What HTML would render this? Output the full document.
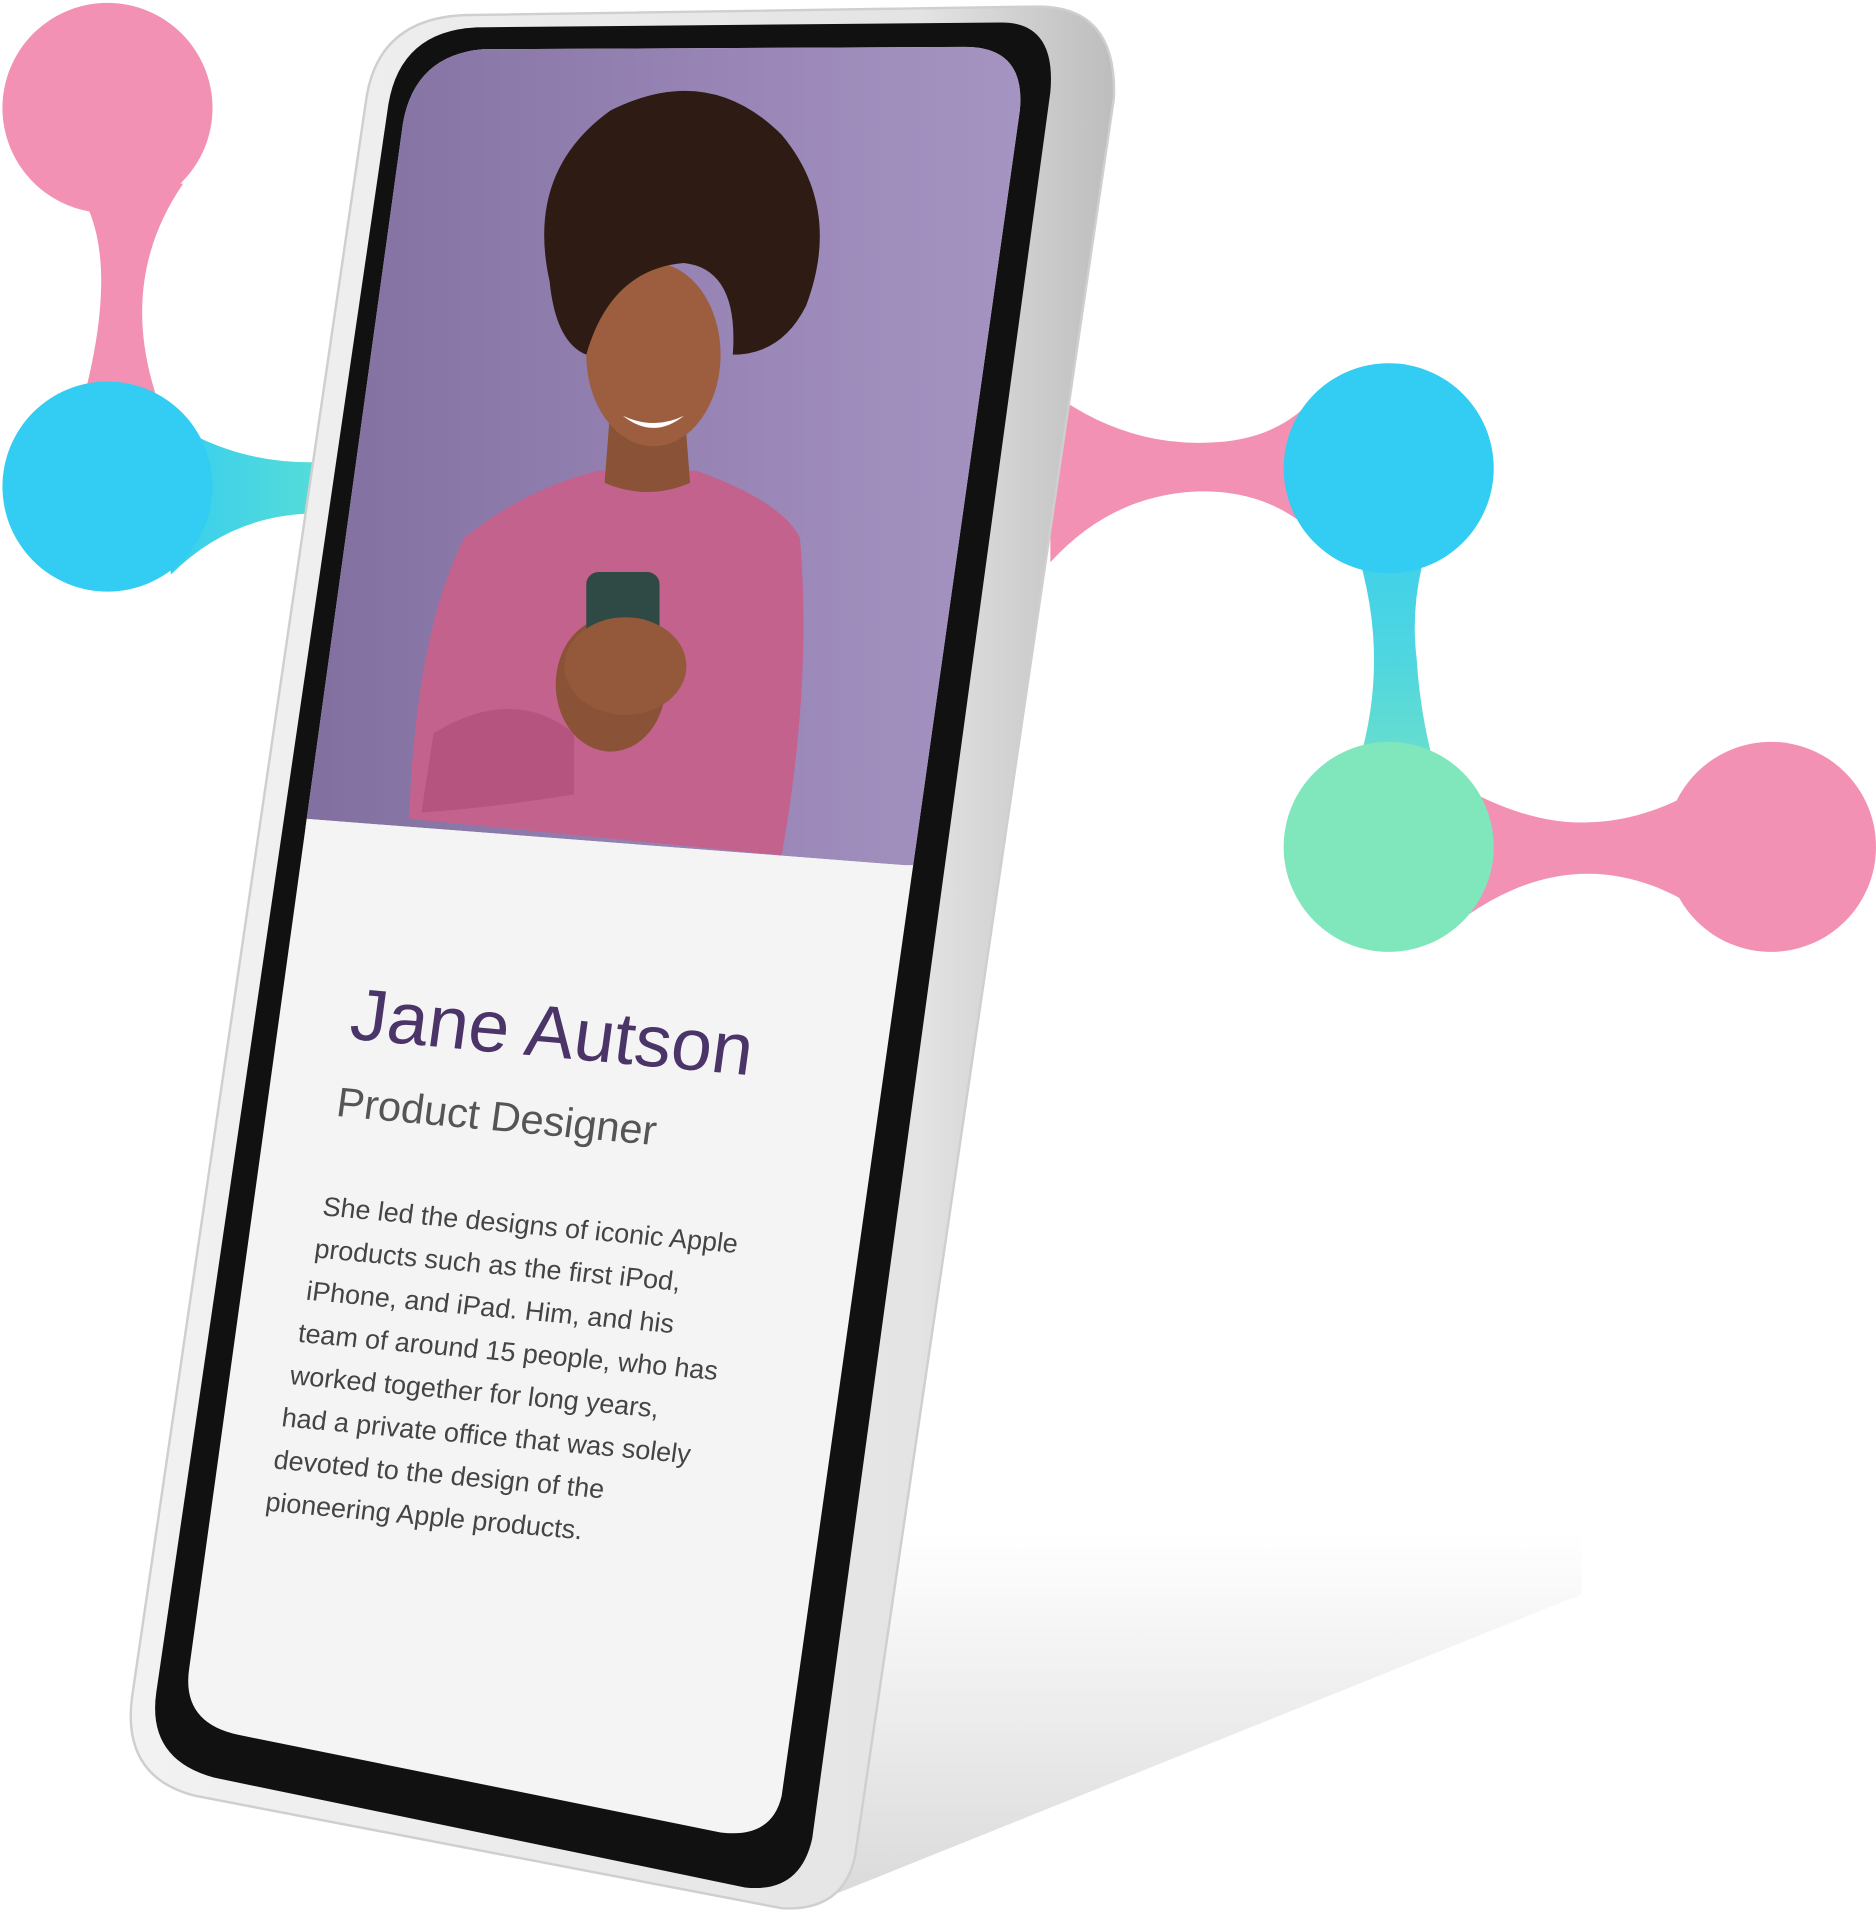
<!DOCTYPE html>
<html><head><meta charset="utf-8"><style>
html,body{margin:0;padding:0;background:#fff;overflow:hidden}
svg{display:block}
text{font-family:"Liberation Sans",sans-serif}
</style></head><body>
<svg width="1876" height="1916" viewBox="0 0 1536 1568" xmlns="http://www.w3.org/2000/svg">
<defs>
<linearGradient id="bg1" x1="0" y1="0" x2="1" y2="0"><stop offset="0" stop-color="#33ccf2"/><stop offset="1" stop-color="#55dcd8"/></linearGradient>
<linearGradient id="bg2" x1="0" y1="0" x2="0" y2="1"><stop offset="0" stop-color="#33ccf2"/><stop offset="0.5" stop-color="#4fd6e0"/><stop offset="1" stop-color="#80e6bb"/></linearGradient>
<linearGradient id="silver" x1="0" y1="0" x2="1" y2="0"><stop offset="0" stop-color="#f2f2f2"/><stop offset="0.8" stop-color="#e4e4e4"/><stop offset="1" stop-color="#bdbdbd"/></linearGradient>
<linearGradient id="shadow" x1="0" y1="0" x2="0" y2="1"><stop offset="0" stop-color="#fff"/><stop offset="1" stop-color="#d9d9d9"/></linearGradient>
<linearGradient id="purp" x1="0" y1="0" x2="1" y2="0"><stop offset="0" stop-color="#7d6c9c"/><stop offset="0.6" stop-color="#9a87b8"/><stop offset="1" stop-color="#a898c4"/></linearGradient>
<clipPath id="scr"><path d="M395,40 L790,38 Q840,38 835,90 L640,1470 Q632,1505 590,1500 L195,1420 Q148,1410 155,1365 L330,100 Q340,45 395,40 Z"/></clipPath>
</defs>
<!-- left blobs -->
<path d="M60,150 Q100,200 70,320 L130,330 Q95,230 150,150 Z" fill="#f291b3"/>
<circle cx="88" cy="88" r="86" fill="#f291b3"/>
<path d="M120,330 Q180,380 260,378 L260,420 Q190,420 140,470 Z" fill="url(#bg1)"/>
<circle cx="88" cy="398" r="86" fill="#33ccf2"/>
<!-- right blobs -->
<path d="M860,320 Q920,365 990,362 Q1050,360 1080,320 L1080,440 Q1040,400 980,402 Q910,405 860,460 Z" fill="#f291b3"/>
<path d="M1190,640 Q1250,675 1300,673 Q1350,672 1400,640 L1400,750 Q1350,715 1300,715 Q1250,715 1200,750 Z" fill="#f291b3"/>
<circle cx="1450" cy="693" r="86" fill="#f291b3"/>
<path d="M1080,380 L1200,380 Q1150,460 1160,540 Q1165,620 1200,700 L1080,700 Q1125,620 1125,540 Q1125,460 1080,380 Z" fill="url(#bg2)"/>
<circle cx="1137" cy="383" r="86" fill="#33ccf2"/>
<circle cx="1137" cy="693" r="86" fill="#80e6bb"/>
<!-- floor shadow -->
<path d="M700,1255 L1295,1255 L1295,1305 L660,1560 Z" fill="url(#shadow)"/>
<!-- phone body -->
<path d="M380,12 L850,5 Q915,5 912,80 L700,1520 Q690,1565 640,1562 L160,1470 Q100,1455 108,1390 L300,80 Q310,15 380,12 Z" fill="url(#silver)" stroke="#cfcfcf" stroke-width="2"/>
<path d="M390,22 L820,18 Q865,18 860,75 L665,1505 Q655,1550 610,1545 L175,1455 Q120,1440 128,1385 L318,85 Q328,25 390,22 Z" fill="#111"/>
<path d="M395,40 L790,38 Q840,38 835,90 L640,1470 Q632,1505 590,1500 L195,1420 Q148,1410 155,1365 L330,100 Q340,45 395,40 Z" fill="#f4f4f4"/>
<g clip-path="url(#scr)">
<path d="M200,0 L900,0 L900,708 L740,708 L250,670 L200,670 Z" fill="url(#purp)"/>
<path d="M250,670 L740,708 L740,720 L250,682Z" fill="#f4f4f4"/>
<path d="M335,670 Q340,520 380,440 Q430,400 490,385 L570,385 Q640,410 655,440 Q665,560 640,700 L335,670 Z" fill="#c4628e"/>
<path d="M355,600 Q420,560 470,600 L470,650 Q410,660 345,665 Z" fill="#b5557f"/>
<path d="M500,330 L560,330 L565,395 Q530,410 495,395 Z" fill="#8a5236"/>
<ellipse cx="535" cy="290" rx="55" ry="75" fill="#9c5e3e"/>
<path d="M510,340 Q535,360 560,340 Q535,352 510,340Z" fill="#fff"/>
<path d="M450,230 Q430,140 500,90 Q580,50 640,110 Q690,170 660,250 Q640,290 600,290 Q605,220 560,215 Q500,220 480,290 Q455,280 450,230 Z" fill="#2e1c14"/>
<ellipse cx="500" cy="560" rx="45" ry="55" fill="#8a5236"/>
<rect x="480" y="468" width="60" height="100" rx="10" fill="#2f4a45"/>
<ellipse cx="512" cy="545" rx="50" ry="40" fill="#94583a"/>
</g>
<!-- text -->
<g transform="translate(285,850) rotate(5.2) skewX(-2.5)">
<text x="0" y="0" font-size="60" fill="#4a3468">Jane Autson</text>
<text x="-2" y="64" font-size="34" fill="#555">Product Designer</text>
<g font-size="22" fill="#444">
<text x="-2" y="146">She led the designs of iconic Apple</text>
<text x="-4" y="181">products such as the first iPod,</text>
<text x="-6" y="216">iPhone, and iPad. Him, and his</text>
<text x="-8" y="251">team of around 15 people, who has</text>
<text x="-10" y="286">worked together for long years,</text>
<text x="-12" y="321">had a private office that was solely</text>
<text x="-14" y="356">devoted to the design of the</text>
<text x="-16" y="391">pioneering Apple products.</text>
</g>
</g>
</svg>
</body></html>
